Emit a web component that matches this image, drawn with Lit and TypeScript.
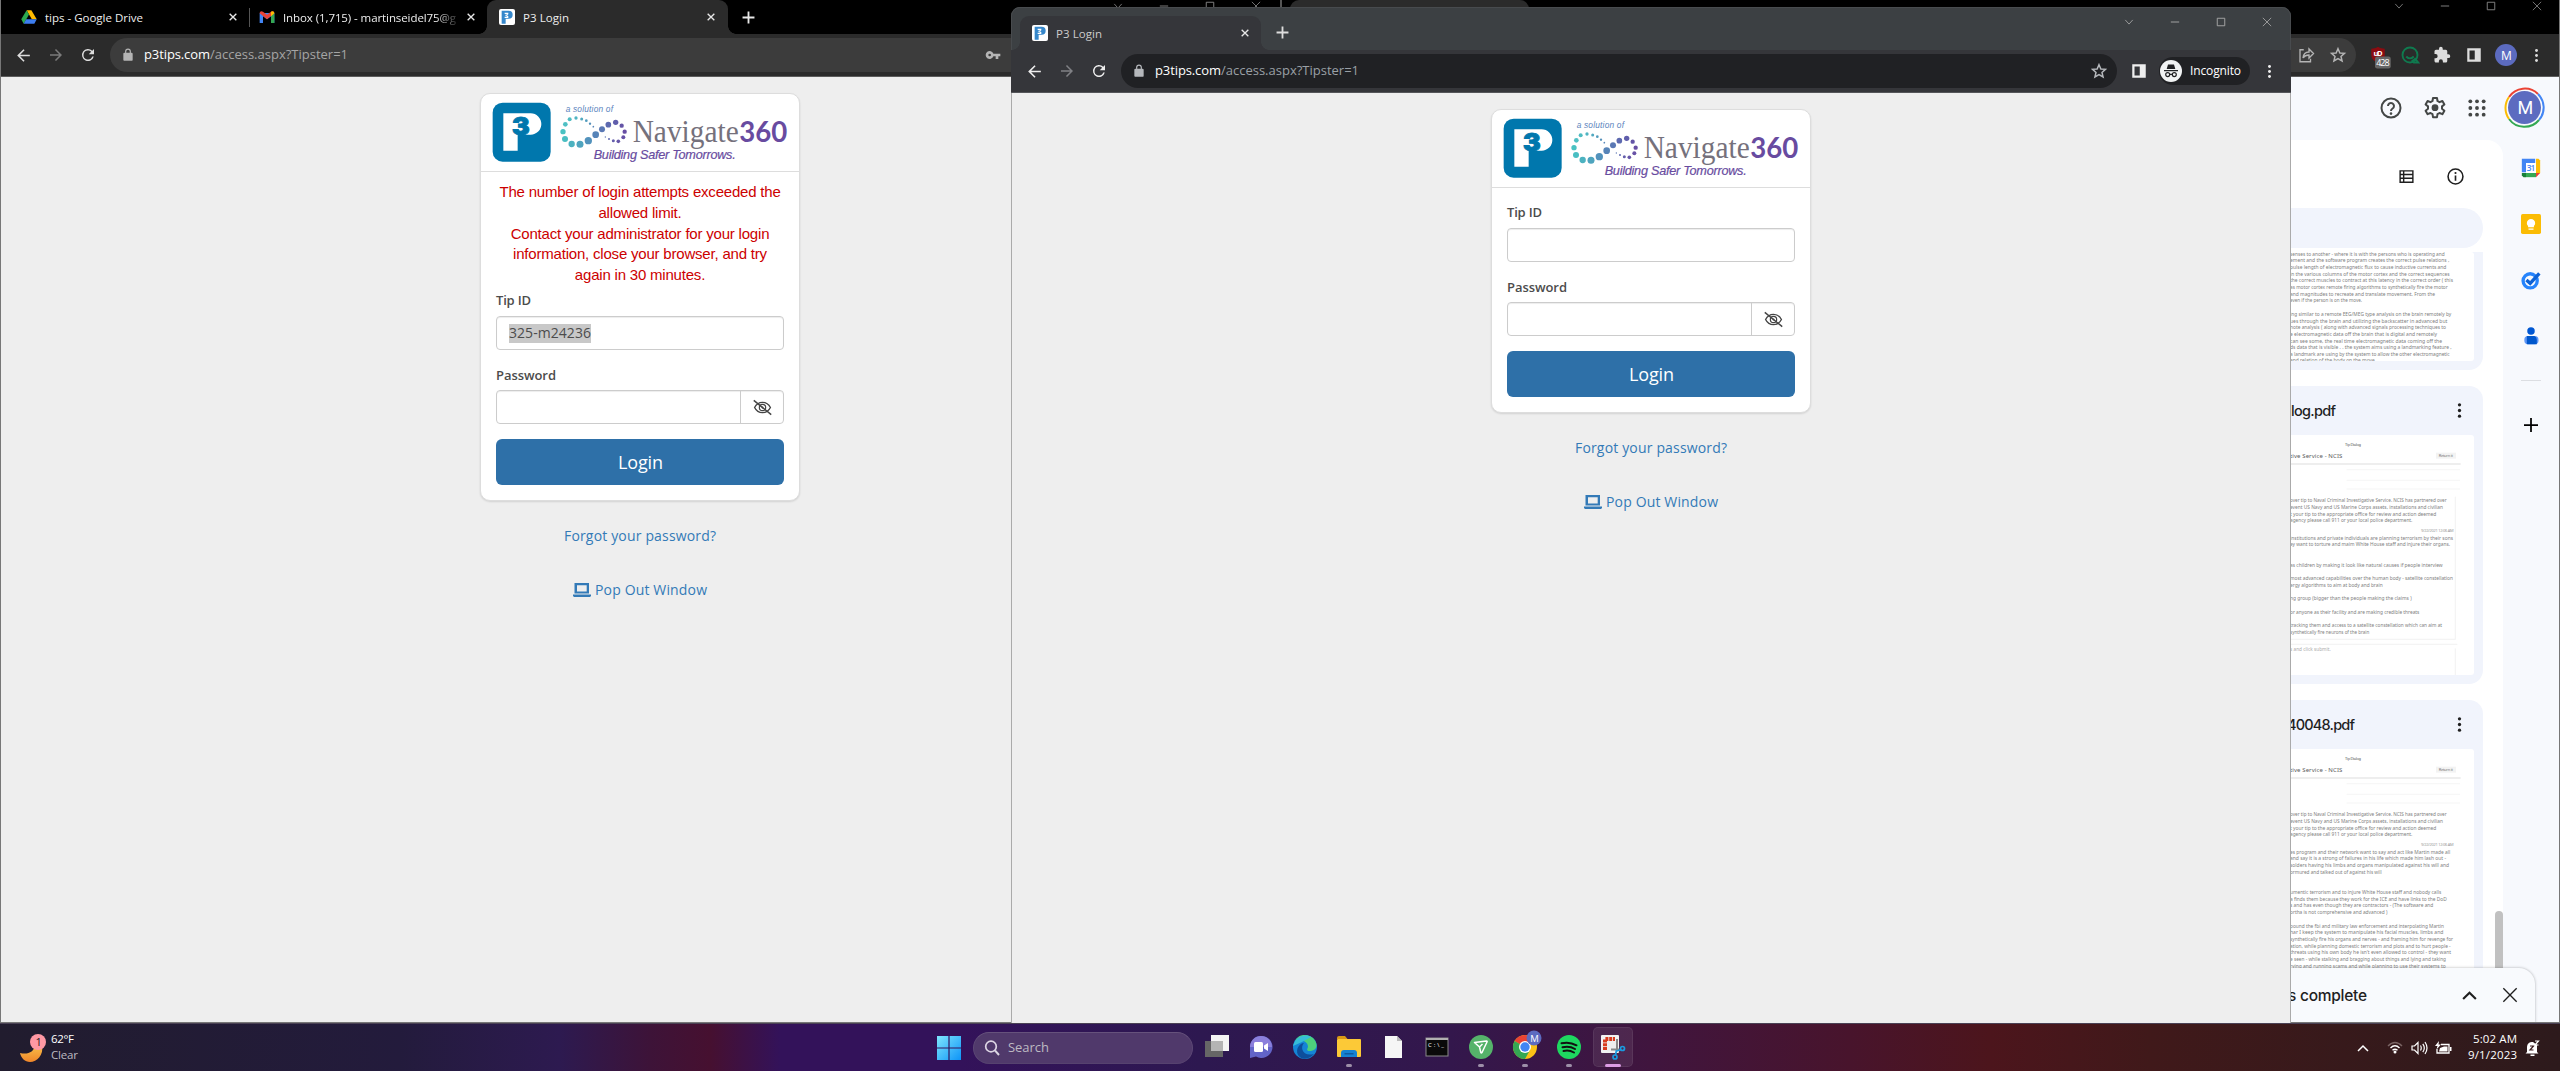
import { LitElement, html, svg, css } from "lit";
import { customElement, property } from "lit/decorators.js";

/** Single-line label drawn to an exact advance width. */
const label = (text: string, width: number, size: number, cls = "", weight = 400) => html`
  <svg class="label ${cls}" width=${width} height=${Math.round(size * 1.5)}>
    <text x="0" y=${Math.round(size * 1.1)} font-size=${size} font-weight=${weight} textLength=${width}>${text}</text>
  </svg>`;

const icon = (body: unknown, size = 20, cls = "") => html`
  <svg class="icon ${cls}" width=${size} height=${size} viewBox="0 0 24 24">${body}</svg>`;

const P = {
  back: svg`<path d="M20 11H7.8l5.6-5.6L12 4l-8 8 8 8 1.4-1.4L7.8 13H20z"/>`,
  forward: svg`<path d="M4 11h12.2l-5.6-5.6L12 4l8 8-8 8-1.4-1.4 5.6-5.6H4z"/>`,
  reload: svg`<path d="M17.65 6.35A8 8 0 1 0 19.73 14h-2.08A6 6 0 1 1 12 6c1.66 0 3.14.69 4.22 1.78L13 11h7V4z"/>`,
  lock: svg`<path d="M18 8h-1V6A5 5 0 0 0 7 6v2H6a2 2 0 0 0-2 2v10c0 1.1.9 2 2 2h12a2 2 0 0 0 2-2V10a2 2 0 0 0-2-2zM9 6a3 3 0 0 1 6 0v2H9z"/>`,
  close: svg`<path d="M4 4l16 16M20 4L4 20" fill="none" stroke="currentColor" stroke-width="3.2"/>`,
  thinClose: svg`<path d="M2 2l20 20M22 2L2 22" fill="none" stroke="currentColor" stroke-width="2"/>`,
  plus: svg`<path d="M12 1v22M1 12h22" fill="none" stroke="currentColor" stroke-width="3.4"/>`,
  thinChevron: svg`<path d="M3 7l9 10 9-10" fill="none" stroke="currentColor" stroke-width="2"/>`,
  minus: svg`<path d="M2 12h20" fill="none" stroke="currentColor" stroke-width="2.2"/>`,
  square: svg`<path d="M3 3h18v18H3z" fill="none" stroke="currentColor" stroke-width="2.2"/>`,
  star: svg`<path d="M12 3.6l2.5 5.7 6.1.5-4.6 4.1 1.4 6-5.4-3.2-5.4 3.2 1.4-6L3.4 9.8l6.1-.5z" fill="none" stroke="currentColor" stroke-width="2"/>`,
  key: svg`<path d="M12.65 10A6 6 0 1 0 12.65 14H16v4h4v-4h3v-4zM7 14a2 2 0 1 1 0-4 2 2 0 0 1 0 4z"/>`,
  dots: svg`<circle cx="12" cy="4" r="2.3"/><circle cx="12" cy="12" r="2.3"/><circle cx="12" cy="20" r="2.3"/>`,
  panel: svg`<path d="M3 3h18v18H3zM6 6v12h7V6z" fill-rule="evenodd"/>`,
  share: svg`<path d="M9 5H4v16h14v-4M8 16c.5-5 3-8 8-8V4l6 6-6 6v-4c-4 0-6 1-8 4z" fill="none" stroke="currentColor" stroke-width="1.8"/>`,
  puzzle: svg`<path d="M20.5 11H19V7a2 2 0 0 0-2-2h-4V3.500a2.500 2.500 0 0 0-5 0V5H4a2 2 0 0 0-2 2v3.800h1.500a2.700 2.700 0 0 1 0 5.400H2V20c0 1.100.9 2 2 2h3.800v-1.500a2.700 2.700 0 0 1 5.400 0V22H17a2 2 0 0 0 2-2v-4h1.500a2.500 2.500 0 0 0 0-5z"/>`,
  help: svg`<circle cx="12" cy="12" r="9.500" fill="none" stroke="currentColor" stroke-width="2"/><path d="M9 10a3 3 0 1 1 4.600 2.500C12.300 13.400 12 13.800 12 15" fill="none" stroke="currentColor" stroke-width="2"/><circle cx="12" cy="17.600" r="1.300"/>`,
  gear: svg`<path d="M10 2h4l.5 3 2 1.200 2.900-1.200 2 3.500-2.400 1.900v2.400l2.400 1.900-2 3.500-2.900-1.200-2 1.200-.5 3h-4l-.5-3-2-1.200-2.900 1.200-2-3.500L5 12.800v-2.400L2.600 8.500l2-3.500 2.900 1.200 2-1.200z" fill="none" stroke="currentColor" stroke-width="2" stroke-linejoin="round"/><circle cx="12" cy="11.700" r="3.400"/>`,
  apps: svg`${[4, 12, 20].map((y) => [4, 12, 20].map((x) => svg`<circle cx=${x} cy=${y} r="2.300"/>`))}`,
  list: svg`<path d="M2 3h20v18H2zM4 5v3h3V5zM9 5v3h11V5zM4 10.300v3.200h3v-3.200zM9 10.300v3.200h11v-3.200zM4 15.700V19h3v-3.300zM9 15.700V19h11v-3.300z" fill-rule="evenodd"/>`,
  info: svg`<circle cx="12" cy="12" r="10.500" fill="none" stroke="currentColor" stroke-width="2.200"/><path d="M12 10.500V18" stroke="currentColor" stroke-width="2.300"/><circle cx="12" cy="7" r="1.500"/>`,
  chevUp: svg`<path d="M3 17l9-9 9 9" fill="none" stroke="currentColor" stroke-width="3"/>`,
  eyeOff: svg`<path d="M2 12c2.500-5 6-6.500 10-6.500S19.500 7 22 12c-2.500 5-6 6.500-10 6.500S4.500 17 2 12z" fill="none" stroke="currentColor" stroke-width="1.700"/><circle cx="12" cy="12" r="4" fill="none" stroke="currentColor" stroke-width="1.500"/><circle cx="12" cy="12" r="1.200"/><path d="M1 3l22 18" stroke="currentColor" stroke-width="1.800"/>`,
};

const drive = svg`<path d="M8.400 2h7.200l8 13.500h-7.300z" fill="#ffba00"/><path d="M8.400 2L.4 15.500 4 22l8-13.700z" fill="#2da94f"/><path d="M7.700 15.500h15.900L20 22H4z" fill="#3c7df0"/>`;
const gmail = svg`<path d="M1 6v15h5V11l6 4.500 6-4.500v10h5V6" fill="#4285f4"/><path d="M18 10v11h5V6z" fill="#34a853"/><path d="M1 6.500C1 3 4 2.500 6 4l6 4.500L18 4c2-1.500 5-1 5 2.500L12 15.500z" fill="#ea4335"/><path d="M18 4c2-1.500 5-1 5 2.500L18 11z" fill="#fbbc04"/>`;
const favicon = svg`<rect width="24" height="24" rx="3" fill="#fff"/><path d="M4 2.500h10.500a6 6 0 0 1 0 12H10V22H4z" fill="#3587cb"/><path d="M8.500 5.500h5.500v2.500l-2 1.500 2 1.500v2.500H8.500v-2h3v-1.500h-2V8.500h2V7.500h-3z" fill="#fff"/>`;

@customElement("login-page")
class LoginPage extends LitElement {
  @property({ type: Boolean }) locked = false;

  static styles = css`
    :host { display: flex; flex-direction: column; align-items: center; background: #eee; flex: none; width: 1278px; font-family: "Open Sans", sans-serif; }
    .card { box-sizing: border-box; width: 320px; margin-top: 16px; background: #fff; border: 1px solid #ddd; border-radius: 10px; box-shadow: 0 1px 2px rgba(0,0,0,.12); overflow: hidden; }
    .logo { display: block; }
    .head { border-bottom: 1px solid #ddd; height: 77px; }
    .body { padding: 10px 15px 15px; }
    .error { font: 15px/20.8px "Liberation Sans", sans-serif; letter-spacing: -.2px; color: #c00; text-align: center; height: 104px; white-space: nowrap; }
    .label { display: block; overflow: visible; fill: #4c4c4c; }
    .field { display: flex; align-items: center; box-sizing: border-box; height: 34px; border: 1px solid #ccc; border-radius: 4px; box-shadow: inset 0 1px 1px rgba(0,0,0,.075); padding-left: 12px; color: #444; }
    .name { height: 30px; display: flex; align-items: center; }
    .name.second { height: 40px; align-items: flex-end; }
    .name.second .label { margin-bottom: 4px; }
    .value { background: #c8c8c8; height: 19px; display: flex; align-items: center; }
    .eye { margin-left: auto; width: 42px; height: 32px; border-left: 1px solid #ccc; display: flex; align-items: center; justify-content: center; }
    .icon { fill: currentColor; display: block; }
    .btn { margin-top: 15px; height: 46px; border-radius: 6px; background: #2e70a8; display: flex; align-items: center; justify-content: center; }
    .btn .label { fill: #fff; }
    .link { display: flex; align-items: center; justify-content: center; height: 22px; gap: 4px; color: #337ab7; }
    .link .label { fill: #337ab7; }
    .forgot { margin-top: 24px; }
    .pop { margin-top: 32px; }
  `;

  private logo() {
    const dots: [number, number, number, string][] = [
      [330, 119, 6, "#4fbcc2"], [349, 115, 5, "#4fb4c2"], [366, 118, 4.5, "#50a8c0"], [380, 123, 4, "#529cbe"], [391, 132, 3.5, "#5590ba"], [401, 141, 2.5, "#5886b8"],
      [317, 134, 7, "#4fc0c4"], [310, 156, 8, "#49c2c2"], [316, 178, 9, "#49bec2"], [336, 193, 9.5, "#4cb2c0"], [361, 194, 10.5, "#4fa4be"], [386, 183, 11, "#5292bc"],
      [408, 165, 10, "#5784b8"], [427, 149, 9, "#5a78b4"], [446, 135, 8.5, "#5e6ab0"], [468, 128, 8, "#605eac"], [486, 138, 6.5, "#6455a6"], [495, 156, 6.5, "#684ea4"],
      [491, 173, 6, "#6852a6"], [476, 185, 5.5, "#6656a8"], [461, 183, 4.5, "#645eac"], [448, 178, 3, "#606ab0"], [437, 172, 2, "#5c76b4"],
    ];
    return html`<svg class="logo" width="318" height="77" viewBox="64 43 954 231">
      <rect x="99" y="69" width="174" height="177" rx="30" fill="#0077ad"/>
      <path d="M131 101h82a32 32 0 0 1 0 64h-39v48h-43z" fill="#fff"/>
      <text x="157" y="166" font-family="Inter" font-weight="900" font-size="73" textLength="53" lengthAdjust="spacingAndGlyphs" fill="#0077ad" stroke="#0077ad" stroke-width="3">3</text>
      ${dots.map(([x, y, r, c]) => svg`<circle cx=${x} cy=${y} r=${r} fill=${c}/>`)}
      <g font-family="Liberation Sans" font-style="italic">
        <text x="318" y="97" font-size="25" textLength="142" fill="#5b84bd">a solution of</text>
        <text x="402" y="239" font-size="38" textLength="426" fill="#684ba0" stroke="#684ba0" stroke-width=".6">Building Safer Tomorrows.</text>
      </g>
      <text x="519" y="187" font-family="Liberation Serif" font-size="94" textLength="318" lengthAdjust="spacingAndGlyphs" fill="#75717c">Navigate</text>
      <text x="839" y="187" font-family="Lato" font-weight="700" font-size="88" textLength="144" lengthAdjust="spacingAndGlyphs" fill="#684ba0">360</text>
    </svg>`;
  }

  render() {
    return html`
      <div class="card">
        <div class="head">${this.logo()}</div>
        <div class="body">
          ${this.locked ? html`<div class="error">The number of login attempts exceeded the<br>allowed limit.<br>Contact your administrator for your login<br>information, close your browser, and try<br>again in 30 minutes.</div>` : ""}
          <div class="name">${label("Tip ID", 35, 13, "", 600)}</div>
          <div class="field">${this.locked ? html`<span class="value">${label("325-m24236", 82, 14)}</span>` : ""}</div>
          <div class="name second">${label("Password", 60, 13, "", 600)}</div>
          <div class="field"><span class="eye">${icon(P.eyeOff, 19)}</span></div>
          <div class="btn">${label("Login", 45, 18)}</div>
        </div>
      </div>
      <div class="link forgot">${label("Forgot your password?", 152, 14)}</div>
      <div class="link pop">
        <svg class="icon" width="18" height="14" viewBox="0 0 18 14"><path d="M1.500 0h14.500v10.500H1.500zM4 2.200v6.300h9.700V2.200zM0 11.500h18V13l-1 1H1l-1-1z" fill-rule="evenodd"/></svg>
        ${label("Pop Out Window", 112, 14)}
      </div>`;
  }
}

type Line = [number, number, string];

const page1: Line[] = [
  [287, 524, "senses to another - where it is with the persons who is operating and"],
  [307, 538, "ement and the software program creates the correct pulse relations ,"],
  [327, 529, "pulse length of electromagnetic flux to cause inductive currents and"],
  [347, 539, "in the various columns of the motor cortex and the correct sequences"],
  [367, 549, "the correct muscles to contract at this latency in the correct order ( this"],
  [387, 533, "as motor cortex remote firing algorithms to synthetically fire the motor"],
  [407, 495, "and magnitudes to recreate and translate movement. From the"],
  [427, 276, "even if the person is on the move."],
  [468, 544, "ing similar to a remote EEG/MEG type analysis on the brain remotely by"],
  [488, 532, "ues through the brain and utilizing the backscatter in advanced but"],
  [508, 528, "note analysis ( along with advanced signals processing techniques to"],
  [528, 501, "e electromagnetic data off the brain that is digital and remotely"],
  [548, 516, "can see some, the real time electromagnetic data coming off the"],
  [568, 545, "ds data that is visible . . the system aims using a landmarking feature ,"],
  [588, 539, "a landmark are using by the system to allow the other electromagnetic"],
  [606, 318, "and relation of the body on the move."],
];
const head: Line[] = [
  [187, 530, "over tip to Naval Criminal Investigative Service. NCIS has partnered over"],
  [207, 519, "event US Navy and US Marine Corps assets, installations and civilian"],
  [227, 499, "t your tip to the appropriate office for review and action deemed"],
  [247, 427, "agency please call 911 or your local police department."],
];
const page2: Line[] = [
  ...head,
  [299, 549, "institutions and private individuals are planning terrorism by their sons"],
  [319, 540, "ey want to torture and maim White House staff and injure their organs."],
  [380, 518, "as children by making it look like natural causes if people interview"],
  [420, 549, "most advanced capabilities over the human body - satellite constellation"],
  [440, 338, "ergy algorithms to aim at body and brain"],
  [481, 425, "ng group (bigger than the people making the claims )"],
  [521, 448, "or anyone as their facility and are making credible threats"],
  [561, 516, "tracking them and access to a satellite constellation which can aim at"],
  [581, 298, "synthetically fire neurons of the brain"],
];
const page3: Line[] = [
  ...head.map(([y, x, s]): Line => [y + 162, x, s]),
  [461, 541, "es program and their network want to say and act like Martin made all"],
  [481, 528, "and say it is a strong of failures in his life which made him lash out -"],
  [501, 537, "solders having his limbs and organs manipulated against his will and"],
  [521, 335, "ormured and talked out of against his will"],
  [582, 514, "umentic terrorism and to injure White House staff and nobody calls"],
  [602, 530, "a finds them because they work for the ICE and have links to the DoD"],
  [622, 490, "s and has even though they are contractors - (The software and"],
  [643, 352, "ortha is not comprehensive and advanced )"],
  [683, 522, "pound the fbi and military law enforcement and interpolating Martin"],
  [703, 520, "har I keep the system to manipulate his facial muscles, limbs and"],
  [723, 549, "synthetically fire his organs and nerves - and framing him for revenge for"],
  [743, 542, "ation, while planning domestic terrorism and plots and to hurt people -"],
  [763, 543, "threats using his own body he isn't even allowed to control - they want"],
  [783, 528, "e seen - while stalking and bragging about things and lying and taking"],
  [803, 527, "rying and running scams and while planning to use their systems to"],
];

@customElement("drive-page")
class DrivePage extends LitElement {
  static styles = css`
    :host { display: flex; flex: 1; margin-left: 1px; background: #f7f9fd; font-family: "Open Sans", sans-serif; overflow: hidden; position: relative; }
    .icon { display: block; fill: currentColor; flex: none; }
    .left { width: 1223px; display: flex; flex-direction: column; flex: none; height: 945px; }
    .top { height: 63px; flex: none; }
    .sheet { background: #fff; border-radius: 0 16px 0 0; flex: 1; padding-left: 1007px; display: flex; flex-direction: column; overflow: hidden; color: #1f1f1f; }
    .tools { height: 68px; box-sizing: border-box; display: flex; align-items: center; justify-content: flex-end; gap: 32px; padding: 4px 39px 0 0; flex: none; }
    .chip { background: #f1f4fc; height: 40px; width: 196px; border-radius: 0 20px 20px 0; flex: none; }
    .card { background: #f1f4fc; width: 196px; box-sizing: border-box; padding: 0 9px 9px 0; flex: none; border-radius: 0 14px 14px 0; margin-bottom: 16px; }
    .card.cut { border-top-right-radius: 0; margin-top: 4px; }
    .title { display: flex; align-items: center; justify-content: space-between; height: 49px; padding-right: 6px; }
    .indent { margin-left: 4px; }
    .label { display: block; fill: #1f1f1f; overflow: visible; font-family: Inter, sans-serif; }
    .page { display: block; background: #fff; border-radius: 0 3px 3px 0; font-family: "Noto Sans", sans-serif; }
    .side { flex: 1; display: flex; flex-direction: column; align-items: center; padding-top: 81px; }
    .side .icon { margin-bottom: 36px; }
    .rule { width: 20px; height: 1px; background: #dcdee2; margin: -2px 0 37px; }
    .header { position: absolute; right: 14px; top: 10px; display: flex; align-items: center; color: #444746; }
    .header .icon { margin-right: 20px; }
    .header .grid { margin-right: 17px; }
    .thumb { position: absolute; left: 1215px; top: 834px; width: 8px; height: 80px; border-radius: 4px; background: #c1c1c1; }
    .toast { position: absolute; left: 900px; width: 355px; top: 891px; height: 55px; box-sizing: border-box; background: #f8fafd; border-radius: 16px 16px 0 0; box-shadow: 0 0 3px rgba(0,0,0,.3); display: flex; align-items: center; padding: 0 17px 1px 108px; color: #1f1f1f; }
    .toast .icon { margin-left: 24px; }
    .toast .label { margin-right: auto; }
  `;

  private page(y0: number, h: number, lines: Line[], headY = 0, extra: unknown = "") {
    return html`<svg class="page" width="187" height=${h / 3} viewBox="51 ${y0} 561 ${h}">
      ${headY ? svg`
        <text x="225" y=${headY} font-size="12" textLength="48" fill="#555">Tip Dialog</text>
        <text x="60" y=${headY + 38} font-size="18" textLength="157" fill="#5c5c5c">tive Service - NCIS</text>
        <rect x="498" y=${headY + 21} width="60" height="18" fill="#f3f3f3"/>
        <text x="506" y=${headY + 35} font-size="12" textLength="43" fill="#777">Return it</text>
        <rect x="60" y=${headY + 54} width="512" height="2" fill="#ccc"/>
        <path d="M230 ${headY + 72}h340M230 ${headY + 104}h340M230 ${headY + 130}h340" stroke="#f0f0f0" stroke-width="2"/>
        <text x="453" y=${headY + 260} font-size="12" textLength="98" fill="#999">9/22/2021 12:06 AM</text>` : ""}
      ${lines.map(([y, x, s]) => svg`<text x="60" y=${y} font-size="14.500" textLength=${x - 60} lengthAdjust="spacingAndGlyphs" fill="#808080">${s}</text>`)}
      ${extra}
    </svg>`;
  }

  render() {
    return html`
      <div class="left">
        <div class="top"></div>
        <div class="sheet">
          <div class="tools">${icon(P.list, 17)}${icon(P.info, 17)}</div>
          <div class="chip"></div>
          <div class="card cut">${this.page(276, 327, page1)}</div>
          <div class="card">
            <div class="title"><span class="indent">${label("log.pdf", 45, 14.5, "", 500)}</span>${icon(P.dots, 17)}</div>
            ${this.page(-15, 720, page2, 17, svg`
              <path d="M60 598h496V170M60 613h502M556 625v82" fill="none" stroke="#ececec" stroke-width="2"/>
              <text x="60" y="634" font-size="14" textLength="122" fill="#aaa">s and click submit.</text>`)}
          </div>
          <div class="card">
            <div class="title"><span>${label("40048.pdf", 68, 14.5, "", 500)}</span>${icon(P.dots, 17)}</div>
            ${this.page(147, 720, page3, 179)}
          </div>
        </div>
      </div>
      <div class="side">
        ${icon(svg`<path d="M1 1h16v6H7v10H1z" fill="#4285f4"/><path d="M6 6h12v12H6z" fill="#fff"/><path d="M18 1h3l2 2v15h-5z" fill="#fbbc04"/><path d="M1 18h5v5H3l-2-2z" fill="#188038"/><path d="M6 18h12v5H6z" fill="#34a853"/><path d="M18 18h5l-5 5z" fill="#ea4335"/><text x="7" y="15.500" font-size="10" font-weight="600" textLength="10" fill="#4285f4">31</text>`, 20)}
        ${icon(svg`<rect width="24" height="24" rx="2" fill="#fbbc04"/><path d="M8.500 14.500a5 5 0 1 1 7 0V16h-7zM9 17.500h6V19H9z" fill="#fff"/>`, 20)}
        ${icon(svg`<circle cx="11" cy="13" r="8.500" fill="none" stroke="#2684fc" stroke-width="4"/><path d="M6.500 12l4.500 4L22 4" fill="none" stroke="#0d63d6" stroke-width="4"/>`, 20)}
        ${icon(svg`<circle cx="12" cy="6" r="4.500" fill="#0057d2"/><rect x="4" y="12" width="17" height="10" rx="4.500" fill="#5e97f6"/><path d="M7 12h9q3 1 3 4.500V22H7z" fill="#0057cc"/>`, 20)}
        <div class="rule"></div>
        ${icon(svg`<path d="M12 0v24M0 12h24" stroke="currentColor" stroke-width="3"/>`, 14)}
      </div>
      <div class="header">
        ${icon(P.help, 24)}${icon(P.gear, 24)}${icon(P.apps, 20, "grid")}
        <svg width="41" height="41" viewBox="0 0 41 41">
          <g fill="none" stroke-width="2"><path d="M5 10A19 19 0 0 1 34 7" stroke="#ea4335"/><path d="M34 7A19 19 0 0 1 35 33" stroke="#4285f4"/><path d="M35 33A19 19 0 0 1 5 32" stroke="#34a853"/><path d="M5 32A19 19 0 0 1 5 10" stroke="#fbbc04"/></g>
          <circle cx="20.500" cy="20.500" r="16.500" fill="#5c6bc0"/><text x="13.500" y="27" font-size="18" font-family="Roboto" textLength="14" fill="#fff">M</text>
        </svg>
      </div>
      <div class="thumb"></div>
      <div class="toast">${label("s complete", 79, 15.5, "", 500)}${icon(P.chevUp, 17)}${icon(P.thinClose, 16)}</div>`;
  }
}

@customElement("task-bar")
class TaskBar extends LitElement {
  static styles = css`
    :host { display: flex; height: 48px; box-sizing: border-box; border-top: 1px solid #4a4154; font-family: "Open Sans", sans-serif; color: #fff;
      background: linear-gradient(90deg, #211c2e 0, #231b3c 400px, #2d1a50 560px, #3d1338 650px, #461030 710px, #33125a 780px, #33125a 960px, #2d1850 1200px, #33174c 1450px, #40153e 1650px, #48142c 1850px, #4c151c 1990px, #40191a 2150px, #2d1a1c 2560px); }
    .label { display: block; fill: #fff; overflow: visible; }
    .dim { fill: #bdb9c2; }
    .weather { width: 930px; display: flex; align-items: center; padding-left: 18px; gap: 5px; box-sizing: border-box; flex: none; }
    .stack { display: flex; flex-direction: column; margin-top: -3px; }
    .stack .label { height: 16px; }
    .start { width: 38px; display: flex; justify-content: center; align-items: center; flex: none; }
    .search { width: 208px; height: 30px; margin: 8px 2px 0 5px; border: 1px solid; border-color: #66527c #5b4774 #56426f; border-radius: 16px; background: #50396b; display: flex; align-items: center; gap: 8px; padding-left: 10px; flex: none; }
    .app { width: 44px; display: flex; flex-direction: column; align-items: center; padding-top: 11px; box-sizing: border-box; flex: none; }
    .app svg { display: block; overflow: visible; }
    .run { width: 6px; height: 3px; border-radius: 2px; background: #9d8fa8; margin-top: 5px; }
    .active { width: 40px; height: 40px; margin: 3px 2px 0; padding-top: 8px; background: rgba(255,255,255,.08); border-radius: 5px; box-shadow: inset 0 0 0 1px rgba(255,255,255,.07); }
    .active .run { width: 16px; background: #dc9ce4; }
    .tray { margin-left: auto; display: flex; align-items: center; padding-right: 20px; }
    .tray > svg { display: block; }
    .wifi { margin-left: 18px; }
    .volume { margin-left: 8px; }
    .battery { margin-left: 7px; }
    .clock { display: flex; flex-direction: column; align-items: flex-end; margin: -3px 8px 0 16px; }
    .clock .label { height: 16px; }
  `;

  render() {
    const app = (body: unknown, run = false, active = false) => html`
      <div class="app ${active ? "active" : ""}"><svg width="24" height="24" viewBox="0 0 24 24">${body}</svg>${run ? html`<div class="run"></div>` : ""}</div>`;
    return html`
      <div class="weather">
        <svg width="28" height="30" viewBox="0 0 28 30">
          <defs><linearGradient id="moon" x2="0" y2="1"><stop stop-color="#f8c14a"/><stop offset="1" stop-color="#f0862a"/></linearGradient></defs>
          <path d="M2 20c8 2 14-1 15-8h7c2 10-5 17-12 17-5 0-9-4-10-9z" fill="url(#moon)"/>
          <circle cx="20" cy="9" r="8" fill="#ff98a4"/><text x="17.500" y="13" font-size="11" textLength="6" fill="#2a1a20">1</text>
        </svg>
        <div class="stack">${label("62°F", 23, 11.5)}${label("Clear", 27, 11.5, "dim")}</div>
      </div>
      <div class="start"><svg width="24" height="24" viewBox="0 0 24 24"><defs><linearGradient id="win" x2="1" y2="1"><stop stop-color="#7fe6fd"/><stop offset="1" stop-color="#0d94f8"/></linearGradient></defs><path d="M0 0h11.400v11.400H0zM12.600 0H24v11.400H12.600zM0 12.600h11.400V24H0zM12.600 12.600H24V24H12.600z" fill="url(#win)"/></svg></div>
      <div class="search">
        <svg width="16" height="16" viewBox="0 0 16 16"><circle cx="7" cy="6.500" r="5.300" fill="none" stroke="#ddd6e4" stroke-width="1.700"/><path d="M11 10.500l4 4.500" stroke="#ddd6e4" stroke-width="1.900"/></svg>
        ${label("Search", 41, 13, "dim")}
      </div>
      ${app(svg`<rect x="0" y="6" width="18" height="16" fill="#666"/><rect x="6" y="0" width="18" height="16" fill="#f4f4f4"/><rect x="6" y="6" width="12" height="10" fill="#b4b4b4"/>`)}
      ${app(svg`<path d="M12 1a11 11 0 1 1-5 20.500L1 23V12A11 11 0 0 1 12 1z" fill="#6264c8"/><path d="M12 1A11 11 0 0 1 23 12H1A11 11 0 0 1 12 1z" fill="#8b7fdc"/><rect x="5" y="7" width="9" height="10" rx="1.500" fill="#fff"/><path d="M15 10.500l4-2.500v8l-4-2.500z" fill="#fff"/>`)}
      ${app(svg`<circle cx="12" cy="12" r="12" fill="#1585d6"/><path d="M2 6C5-1 14-2 20 3c5 5 5 12-2 13-5 .5-4-2-3-4C15 6 8 4 2 6z" fill="#4ed07c"/><path d="M0 11C2 2 12-2 18 2L9 7z" fill="#36bdd8"/><path d="M11 8c-4 4-2 14 10 11-5 6-13 6-16 1-3-6 2-12 6-12z" fill="#0d4f9c"/>`)}
      ${app(svg`<path d="M0 3q0-2 2-2h6l2.500 3H0z" fill="#d99a15"/><rect y="4" width="24" height="18" rx="1" fill="#fcc937"/><path d="M4 22v-4q0-3 3-3h10q3 0 3 3v4z" fill="#1681d2"/><rect x="7.500" y="18" width="9" height="1.500" fill="#0e5a9f"/>`, true)}
      ${app(svg`<path d="M4 1h12l5 5v17H4z" fill="#f6f6f6"/><path d="M16 1v5h5z" fill="#bbb"/>`)}
      ${app(svg`<rect x="1" y="3" width="22" height="18" fill="#0a0a0a" stroke="#8a8a8a"/><rect x="1" y="3" width="22" height="2" fill="#b0b0b0"/><text x="3" y="12" font-size="6" textLength="16" fill="#fff">C:\\_</text>`)}
      ${app(svg`<circle cx="12" cy="12" r="12" fill="#55b36a"/><path d="M5.500 7.500l12-1.500q1 0 .5 1L13 17.500q-.8 1-1.200 0L10.500 12zM10.500 12l3-3" fill="none" stroke="#fff" stroke-width="1.500" stroke-linejoin="round"/>`, true)}
      ${app(svg`<circle cx="12" cy="12" r="12" fill="#fbc116"/><path d="M12 12L1.600 6A12 12 0 0 1 22.400 6z" fill="#ea4335"/><path d="M1.600 6A12 12 0 0 0 12 24l5-9-5-3z" fill="#34a853"/><circle cx="12" cy="12" r="6" fill="#fff"/><circle cx="12" cy="12" r="4.700" fill="#4285f4"/><circle cx="21" cy="3" r="7.500" fill="#5c6bc0"/><text x="17.200" y="6.500" font-size="9.500" textLength="7.800" fill="#fff">M</text>`, true)}
      ${app(svg`<circle cx="12" cy="12" r="12" fill="#1ed760"/><path d="M4.500 8.300q8-2 15 2M5.500 12.300q7-1.700 12.500 1.700M6.500 16q5.500-1.400 10.500 1.500" fill="none" stroke="#111" stroke-width="2" stroke-linecap="round"/>`, true)}
      ${app(svg`<rect x="0" y="0" width="18" height="18" rx="1" fill="#f2f2f2"/><path d="M4 15V4h10" fill="none" stroke="#d83b1e" stroke-width="4" stroke-dasharray="3 .800"/><path d="M6 6h10v10H6z" fill="#eee"/><path d="M16 4v11M10 14.500h8" stroke="#888" stroke-width="2"/><circle cx="21.500" cy="13.500" r="2" fill="none" stroke="#1a9be0" stroke-width="1.700"/><circle cx="14" cy="22" r="2" fill="none" stroke="#1a9be0" stroke-width="1.700"/><path d="M16 16l4-1.500M15.500 15l-1 5" stroke="#1a9be0" stroke-width="1.700"/>`, true, true)}
      <div class="tray">
        <svg width="12" height="8" viewBox="0 0 12 8"><path d="M1 7l5-5 5 5" fill="none" stroke="#fff" stroke-width="1.500"/></svg>
        <svg class="wifi" width="16" height="13" viewBox="0 0 16 13"><g fill="none" stroke-width="1.400"><path d="M1 5q7-7 14 0" stroke="#7a6464"/><path d="M3.500 7q4.500-4.500 9 0M5.500 9.300q2.500-2.300 5 0" stroke="#fff"/></g><circle cx="8" cy="11" r="1.500" fill="#fff"/></svg>
        <svg class="volume" width="17" height="14" viewBox="0 0 17 14"><g fill="none" stroke="#fff" stroke-width="1.200"><path d="M1 5h2.500L7 1.500v11L3.500 9H1zM9.500 4.500q1.500 2.500 0 5M11.800 2.800q3 4.200 0 8.400M14 1q4 6 0 12"/></g></svg>
        <svg class="battery" width="17" height="14" viewBox="0 0 17 14"><path d="M6 3.500h8v8.500H2V8" fill="none" stroke="#fff" stroke-width="1.300"/><path d="M5 7l4-1.500h3.500v5H4zM15 6h1.500v4H15z" fill="#fff"/><path d="M4 0L0 5h2.500L1.500 8.500 6 3.500H3.500z" fill="#fff"/></svg>
        <div class="clock">${label("5:02 AM", 44, 11.5)}${label("9/1/2023", 49, 11.5)}</div>
        <svg width="15" height="16" viewBox="0 0 15 16"><path d="M2 12V7a5 5 0 0 1 6-5l4 3v7l1.500 1.500H.5z" fill="#fff"/><path d="M5.500 14.500h4v1.500h-4z" fill="#fff"/><path d="M5 6h3.500L5 10h3.500" fill="none" stroke="#3a1b1d" stroke-width="1.200"/><path d="M10 1h3.500L10 5h3.500" fill="none" stroke="#fff" stroke-width="1.200"/></svg>
      </div>`;
  }
}

@customElement("app-root")
class AppRoot extends LitElement {
  static styles = css`
    :host { display: block; width: 2560px; height: 1071px; position: relative; overflow: hidden; background: #000; font-family: "Open Sans", sans-serif; }
    .icon, .label { display: block; flex: none; overflow: visible; }
    .icon { fill: currentColor; }
    .desktop { display: flex; flex-direction: column; height: 1071px; }
    .main { height: 1023px; box-sizing: border-box; display: flex; flex-direction: column; border: solid #777; border-width: 0 1px 1px; }
    .strip { height: 34px; display: flex; align-items: center; color: #e8e8e8; flex: none; overflow: hidden; }
    .tab { display: flex; align-items: center; box-sizing: border-box; height: 34px; flex: none; gap: 8px; padding-left: 12px; padding-right: 12px; position: relative; }
    .tab .label { fill: #eee; }
    .shut { margin-left: auto; }
    .first { width: 248px; padding-left: 20px; padding-right: 11px; }
    .second { width: 238px; padding-left: 10px; padding-right: 11px; }
    .second::before { content: ""; position: absolute; left: 0; top: 8px; width: 1px; height: 19px; background: #555; }
    .second .label { -webkit-mask-image: linear-gradient(90deg, #000 88%, rgba(0,0,0,.2)); }
    .on { width: 241px; background: #2b2b2b; border-radius: 9px 9px 0 0; }
    .on::before, .on::after { content: ""; position: absolute; bottom: 0; width: 8px; height: 8px; }
    .on::before { left: -8px; background: radial-gradient(circle at 0 0, transparent 7.500px, #2b2b2b 8px); }
    .on::after { right: -8px; background: radial-gradient(circle at 100% 0, transparent 7.500px, #2b2b2b 8px); }
    .new { margin-left: 14px; }
    .controls { display: flex; gap: 36px; align-self: flex-start; margin-top: 1px; color: #888; flex: none; }
    .behind { margin-left: 358px; }
    .seam { width: 2px; height: 34px; background: #555; margin: 0 8px 0 19px; flex: none; }
    .ghost { width: 239px; height: 34px; background: #2b2b2b; border-radius: 9px 9px 0 0; flex: none; }
    .far { margin-left: auto; margin-right: 17px; }
    .bar { height: 42px; display: flex; align-items: center; background: #2b2b2b; border-bottom: 1px solid #5c5c5c; flex: none; color: #ddd; padding-left: 13px; }
    .nav { display: flex; gap: 14px; align-items: center; }
    .off { color: #7b7b7b; }
    .omni { height: 34px; border-radius: 17px; background: #3c3c3c; display: flex; align-items: center; box-sizing: border-box; flex: none; margin-left: 13px; color: #b4b4b4; }
    .omni .label { fill: #fff; }
    .omni .path { fill: #a5a5a5; }
    .wide { width: 2246px; padding: 0 9px 0 11px; }
    .keyed { margin-left: 637px; margin-right: auto; }
    .wide .star { margin-left: 14px; }
    .lock { margin-right: 9px; }
    .ext { display: flex; align-items: center; gap: 14px; margin-left: 13px; }
    .me { margin: 0 -2px; }
    .content { display: flex; flex: 1; overflow: hidden; }
    .private { position: absolute; left: 1011px; top: 7px; width: 1280px; height: 1016px; box-sizing: border-box; background: #3c4043; border-radius: 9px 9px 0 0; overflow: hidden; display: flex; flex-direction: column; box-shadow: 0 0 0 1px #484b4e inset; }
    .private .strip { height: 43px; align-items: flex-end; }
    .private .tab { width: 241px; margin-left: 9px; background: #35363a; padding-right: 11px; }
    .private .on::before { background: radial-gradient(circle at 0 0, transparent 7.500px, #35363a 8px); }
    .private .on::after { background: radial-gradient(circle at 100% 0, transparent 7.500px, #35363a 8px); }
    .private .tab .label { fill: #ccc; }
    .private .new { margin-bottom: 11px; margin-left: 15px; color: #ddd; }
    .private .controls { margin-left: auto; margin-top: 10px; margin-right: 19px; color: #aaa; }
    .private .bar { background: #35363a; padding-left: 14px; border-color: #55565a; color: #eee; }
    .private .off { color: #808185; }
    .private .omni { background: #202124; width: 996px; padding: 0 9px 0 11px; color: #b5b8bc; }
    .private .omni .path { fill: #9aa0a6; }
    .private .star { margin-left: auto; }
    .private .content { border: solid #aaa; border-width: 0 1px; }
    .side { margin-left: 13px; }
    .pill { margin-left: 11px; width: 91px; height: 28px; border-radius: 14px; background: #202124; display: flex; align-items: center; gap: 8px; padding-left: 1px; box-sizing: border-box; flex: none; }
    .pill .label { fill: #fff; }
    .menu { margin-left: 12px; }
  `;

  private url() {
    return html`${icon(P.lock, 14, "lock")}${label("p3tips.com", 66, 13)}${label("/access.aspx?Tipster=1", 138, 13, "path")}`;
  }
  private nav() {
    return html`<div class="nav">${icon(P.back, 19)}${icon(P.forward, 18, "off")}${icon(P.reload, 18)}</div>`;
  }
  private controls(cls = "") {
    return html`<div class="controls ${cls}">${icon(P.thinChevron, 10)}${icon(P.minus, 10)}${icon(P.square, 10)}${icon(P.thinClose, 10)}</div>`;
  }

  render() {
    return html`
      <div class="desktop">
        <div class="main">
          <div class="strip">
            <div class="tab first">${icon(drive, 16)}${label("tips - Google Drive", 98, 11.5)}${icon(P.close, 10, "shut")}</div>
            <div class="tab second">${icon(gmail, 16)}${label("Inbox (1,715) - martinseidel75@g", 173, 11.5)}${icon(P.close, 10, "shut")}</div>
            <div class="tab on">${icon(favicon, 16)}${label("P3 Login", 46, 11.5)}${icon(P.close, 10, "shut")}</div>
            ${icon(P.plus, 13, "new")}
            ${this.controls("behind")}
            <div class="seam"></div><div class="ghost"></div>
            ${this.controls("far")}
          </div>
          <div class="bar">
            ${this.nav()}
            <div class="omni wide">${this.url()}${icon(P.key, 16, "keyed")}${icon(P.share, 18)}${icon(P.star, 18, "star")}</div>
            <div class="ext">
              ${icon(svg`<path d="M12 1c3 2 6 2.500 9 2.500V12c0 5-4 8-9 11-5-3-9-6-9-11V3.500C6 3.500 9 3 12 1z" fill="#8c0b10"/><text x="6" y="13" font-size="10" font-weight="700" textLength="12" fill="#fff">uD</text><rect x="8" y="14" width="21" height="16" rx="3" fill="#666"/><text x="9.500" y="26.500" font-size="12" textLength="18" fill="#fff">428</text>`, 18)}
              ${icon(svg`<circle cx="12" cy="12" r="10" fill="none" stroke="#0f7a4f" stroke-width="2.500"/><path d="M7 14q5 5 10 0M15 20l4-3 4 5h-6z" fill="none" stroke="#0f7a4f" stroke-width="2.500"/>`, 18)}
              ${icon(P.puzzle, 18)}${icon(P.panel, 18)}
              <svg class="icon me" width="22" height="22"><circle cx="11" cy="11" r="11" fill="#5c6bc0"/><text x="6" y="15.500" font-size="12" textLength="10" fill="#fff">M</text></svg>
              ${icon(P.dots, 15)}
            </div>
          </div>
          <div class="content"><login-page locked></login-page><drive-page></drive-page></div>
        </div>
        <task-bar></task-bar>
      </div>
      <div class="private">
        <div class="strip">
          <div class="tab on">${icon(favicon, 16)}${label("P3 Login", 46, 11.5)}${icon(P.close, 10, "shut")}</div>
          ${icon(P.plus, 13, "new")}
          ${this.controls()}
        </div>
        <div class="bar">
          ${this.nav()}
          <div class="omni">${this.url()}${icon(P.star, 18, "star")}</div>
          ${icon(P.panel, 18, "side")}
          <div class="pill">
            <svg class="icon" width="22" height="22" viewBox="0 0 22 22"><circle cx="11" cy="11" r="11" fill="#f1f3f4"/><path d="M8 4.500h6l1.300 4.500H6.700zM4 10h14v1.200H4z" fill="#202124"/><g fill="none" stroke="#202124" stroke-width="1.200"><circle cx="7.700" cy="14.600" r="2"/><circle cx="14.300" cy="14.600" r="2"/><path d="M9.700 14.300h2.600"/></g></svg>
            ${label("Incognito", 51, 12)}
          </div>
          ${icon(P.dots, 15, "menu")}
        </div>
        <div class="content"><login-page></login-page></div>
      </div>`;
  }
}
